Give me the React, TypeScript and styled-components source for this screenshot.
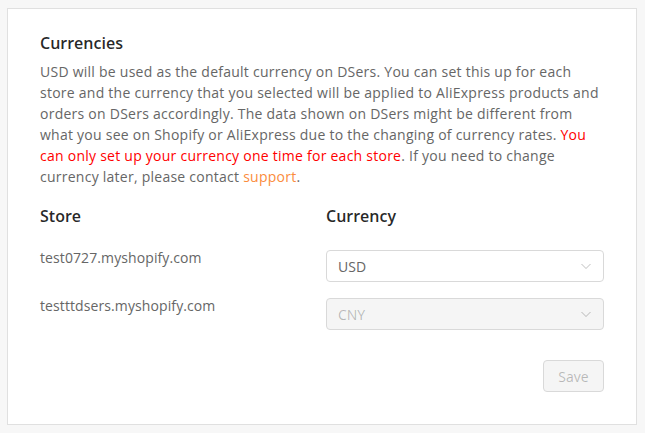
import styled, { createGlobalStyle } from "styled-components";

const GlobalStyle = createGlobalStyle`
    body {
        margin: 0;
        background: #f7f7f7;
        font-family: "Open Sans", "Noto Sans", sans-serif;
        font-size: 14px;
        color: #666;
    }
`;

const stores = [
    { name: "test0727.myshopify.com", currency: "USD", disabled: false },
    { name: "testttdsers.myshopify.com", currency: "CNY", disabled: true },
];

export default function App() {
    return (
        <>
            <GlobalStyle />
            <Page>
                <Card>
                    <Title>Currencies</Title>
                    <Description>
                        USD will be used as the default currency on DSers. You can set this up
                        for each store and the currency that you selected will be applied to
                        AliExpress products and orders on DSers accordingly. The data shown on
                        DSers might be different from what you see on Shopify or AliExpress due
                        to the changing of currency rates.{" "}
                        <Warning>You can only set up your currency one time for each store</Warning>
                        . If you need to change currency later, please contact{" "}
                        <Link href="#">support</Link>.
                    </Description>
                    <Table>
                        <HeadCell>Store</HeadCell>
                        <HeadCell>Currency</HeadCell>
                        {stores.map((store) => (
                            <Row key={store.name}>
                                <StoreName>{store.name}</StoreName>
                                <Select disabled={store.disabled}>
                                    <span>{store.currency}</span>
                                    <Arrow viewBox="0 0 12 12">
                                        <path d="M1.5 4 L6 8.5 L10.5 4" />
                                    </Arrow>
                                </Select>
                            </Row>
                        ))}
                    </Table>
                    <Footer>
                        <SaveButton disabled>Save</SaveButton>
                    </Footer>
                </Card>
            </Page>
        </>
    );
}

// style
const Page = styled.div`
    padding: 8px 8px 8px 7px;
`;

const Card = styled.div`
    width: 630px;
    box-sizing: border-box;
    height: 417px;
    background: #fff;
    border: 1px solid #e0e0e0;
    padding: 22px 32px 0 32px;
`;

const Title = styled.h2`
    margin: 0 0 6px;
    font-size: 16px;
    font-weight: 600;
    line-height: 24px;
    color: rgba(0, 0, 0, 0.85);
`;

const Description = styled.p`
    margin: 0;
    line-height: 21px;
    letter-spacing: 0.25px;
`;

const Warning = styled.span`
    color: #f00;
`;

const Link = styled.a`
    color: #fb8c3c;
    text-decoration: none;
`;

const Table = styled.div`
    display: grid;
    grid-template-columns: 286px 1fr;
    row-gap: 16px;
    margin-top: 17px;
`;

const HeadCell = styled.div`
    font-size: 16px;
    font-weight: 600;
    line-height: 24px;
    color: rgba(0, 0, 0, 0.85);
    margin-bottom: 6px;
`;

const Row = styled.div`
    display: contents;
`;

const StoreName = styled.div`
    line-height: 16px;
    letter-spacing: 0.1px;
`;

const Select = styled.div<{ disabled?: boolean }>`
    height: 32px;
    box-sizing: border-box;
    display: flex;
    align-items: center;
    justify-content: space-between;
    padding: 0 11px;
    border: 1px solid #d9d9d9;
    border-radius: 4px;
    background: ${(p) => (p.disabled ? "#f5f5f5" : "#fff")};
    color: ${(p) => (p.disabled ? "rgba(0, 0, 0, 0.25)" : "#666")};
`;

const Arrow = styled.svg`
    width: 12px;
    height: 12px;
    fill: none;
    stroke: rgba(0, 0, 0, 0.25);
    stroke-width: 1;
`;

const Footer = styled.div`
    display: flex;
    justify-content: flex-end;
    margin-top: 30px;
`;

const SaveButton = styled.button`
    height: 32px;
    width: 61px;
    font-family: inherit;
    font-size: 14px;
    border: 1px solid #d9d9d9;
    border-radius: 4px;
    background: #f5f5f5;
    color: rgba(0, 0, 0, 0.25);
`;
